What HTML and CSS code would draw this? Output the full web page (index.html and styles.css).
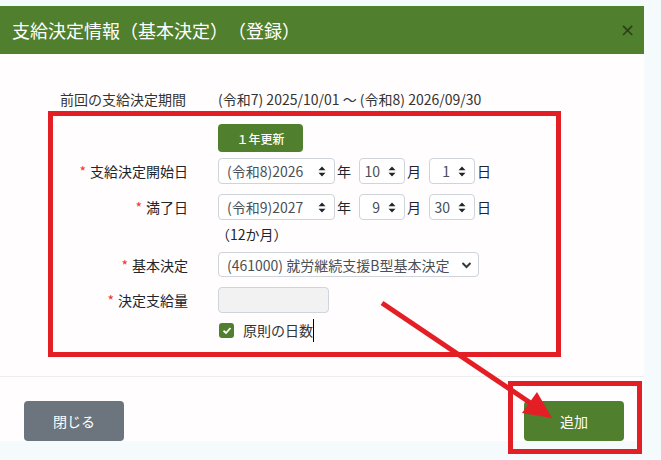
FILE: index.html
```html
<!DOCTYPE html>
<html lang="ja">
<head>
  <meta charset="UTF-8" />
  <title>支給決定情報（基本決定）（登録）</title>
  <link rel="stylesheet" href="styles.css">
</head>
<body>

  <div class="modal">
    <div class="modal-header">
      <h2 class="modal-title">支給決定情報（基本決定）（登録）</h2>
      <span class="close">×</span>
    </div>

    <div class="modal-body">
      <div class="prev-row">
        <span class="prev-label">前回の支給決定期間</span>
        <span>(令和7) 2025/10/01 ～ (令和8) 2026/09/30</span>
      </div>

      <div class="form-row row-btn">
        <span></span>
        <div><button class="btn btn-green btn-small">１年更新</button></div>
      </div>

      <div class="form-row row-start">
        <label><span class="req">*</span>支給決定開始日</label>
        <div class="date">
          <div class="select sel-year"><span>(令和8)2026</span><svg width="8" height="11" viewBox="0 0 8 11"><path d="M4 0.5 L7.5 4.2 H0.5 Z M4 10.5 L7.5 6.8 H0.5 Z" fill="#212529"/></svg></div>
          <span class="unit">年</span>
          <div class="select sel-num"><span>10</span><svg width="8" height="11" viewBox="0 0 8 11"><path d="M4 0.5 L7.5 4.2 H0.5 Z M4 10.5 L7.5 6.8 H0.5 Z" fill="#212529"/></svg></div>
          <span class="unit">月</span>
          <div class="select sel-num"><span>1</span><svg width="8" height="11" viewBox="0 0 8 11"><path d="M4 0.5 L7.5 4.2 H0.5 Z M4 10.5 L7.5 6.8 H0.5 Z" fill="#212529"/></svg></div>
          <span class="unit">日</span>
        </div>
      </div>

      <div class="form-row row-end">
        <label><span class="req">*</span>満了日</label>
        <div class="date">
          <div class="select sel-year"><span>(令和9)2027</span><svg width="8" height="11" viewBox="0 0 8 11"><path d="M4 0.5 L7.5 4.2 H0.5 Z M4 10.5 L7.5 6.8 H0.5 Z" fill="#212529"/></svg></div>
          <span class="unit">年</span>
          <div class="select sel-num"><span>9</span><svg width="8" height="11" viewBox="0 0 8 11"><path d="M4 0.5 L7.5 4.2 H0.5 Z M4 10.5 L7.5 6.8 H0.5 Z" fill="#212529"/></svg></div>
          <span class="unit">月</span>
          <div class="select sel-num"><span>30</span><svg width="8" height="11" viewBox="0 0 8 11"><path d="M4 0.5 L7.5 4.2 H0.5 Z M4 10.5 L7.5 6.8 H0.5 Z" fill="#212529"/></svg></div>
          <span class="unit">日</span>
        </div>
      </div>

      <div class="form-row row-months">
        <span></span>
        <span class="months">（12か月）</span>
      </div>

      <div class="form-row row-kind">
        <label><span class="req">*</span>基本決定</label>
        <div class="select sel-wide"><span>(461000) 就労継続支援B型基本決定</span><svg width="11" height="8" viewBox="0 0 11 8"><path d="M1.5 2 L5.5 6 L9.5 2" fill="none" stroke="#343a40" stroke-width="2"/></svg></div>
      </div>

      <div class="form-row row-amount">
        <label><span class="req">*</span>決定支給量</label>
        <div class="input-disabled"></div>
      </div>

      <div class="form-row row-check">
        <span></span>
        <div class="check">
          <span class="checkbox"><svg width="10" height="9" viewBox="0 0 10 9"><path d="M1.5 4.8 L4 7 L8.5 2" fill="none" stroke="#fff" stroke-width="1.8"/></svg></span>
          <span>原則の日数</span><span class="caret"></span>
        </div>
      </div>
    </div>

    <div class="modal-footer">
      <button class="btn btn-gray">閉じる</button>
      <button class="btn btn-green">追加</button>
    </div>
  </div>

  <!-- annotation marks over the screenshot -->
  <svg class="marks" width="661" height="460" viewBox="0 0 661 460">
    <rect x="50.5" y="113.5" width="508" height="241" fill="none" stroke="#e31e24" stroke-width="5"/>
    <rect x="510.5" y="383.5" width="129" height="68" fill="none" stroke="#e31e24" stroke-width="5"/>
    <line x1="382" y1="303" x2="532" y2="404" stroke="#e31e24" stroke-width="5"/>
    <polygon points="522,413 537,392 552,418" fill="#e31e24"/>
  </svg>

</body>
</html>
```

FILE: styles.css
```css
:root {
  --green: #507f2e;
  --gray: #6c757d;
  --text: #212529;
  --muted: #495057;
  --border: #ced4da;
  --font-main: "Noto Sans CJK JP", "Noto Sans", sans-serif;
}

body {
  margin: 0;
  background: #f5fbfd;
  font-family: var(--font-main);
  font-size: 14px;
  color: var(--text);
  position: relative;
  height: 460px;
  overflow: hidden;
  text-spacing-trim: space-all;
}

.modal {
  width: 644px;
  margin-top: 6px;
  background: #fffdfd;
}

.modal-header {
  height: 48px;
  background: var(--green);
  display: flex;
  align-items: center;
  justify-content: space-between;
  padding: 0 9px 0 12px;
}

.modal-title {
  margin: 0;
  font-size: 18px;
  font-weight: normal;
  color: #fff;
  line-height: 24px;
}

.close {
  font-family: "DejaVu Sans", sans-serif;
  font-size: 18px;
  color: #000;
  opacity: 0.5;
  line-height: 20px;
}

.modal-body {
  padding: 35px 0 0 0;
  height: 287px;
  border-bottom: 1px solid #eceeef;
}

.prev-row {
  display: flex;
  padding-left: 60px;
  line-height: 20px;
  color: #333;
}

.prev-label {
  width: 158px;
}

.form-row {
  display: grid;
  grid-template-columns: 188px 1fr;
  column-gap: 30px;
  align-items: center;
}

.form-row label {
  text-align: right;
  line-height: 20px;
}

.req {
  color: #e8343a;
  margin-right: 4px;
}

.row-btn { margin-top: 15px; }
.row-start { margin-top: 6px; }
.row-end { margin-top: 10px; }
.row-months { margin-top: 4px; line-height: 20px; }
.row-kind { margin-top: 8px; }
.row-amount { margin-top: 10px; }
.row-check { margin-top: 5px; }

.date {
  display: flex;
  align-items: center;
}

.select {
  height: 26px;
  box-sizing: border-box;
  border: 1px solid var(--border);
  border-radius: 4px;
  background: #fff;
  color: var(--muted);
  display: flex;
  align-items: center;
  justify-content: space-between;
  padding: 0 8px 0 8px;
}

.sel-year { width: 117px; }

.sel-num {
  width: 46px;
  padding-left: 4px;
}

.sel-num span {
  flex: 1;
  text-align: right;
  margin-right: 8px;
}

.sel-wide {
  width: 261px;
  height: 25px;
  padding-right: 6px;
}

.unit {
  margin: 0 8px 0 2px;
}

.months {
  margin-left: -2px;
}

.input-disabled {
  width: 111px;
  height: 26px;
  box-sizing: border-box;
  border: 1px solid var(--border);
  border-radius: 4px;
  background: #f2f2f2;
}

.check {
  display: flex;
  align-items: center;
  line-height: 24px;
  color: #333;
}

.checkbox {
  width: 15px;
  height: 15px;
  border-radius: 3px;
  background: var(--green);
  display: flex;
  align-items: center;
  justify-content: center;
  margin: 0 9px 0 1px;
}

.caret {
  width: 1px;
  height: 23px;
  background: #000;
}

.modal-footer {
  display: flex;
  justify-content: space-between;
  padding: 24px 20px 0 24px;
}

.btn {
  width: 100px;
  height: 40px;
  border: none;
  border-radius: 4px;
  color: #fff;
  font-family: var(--font-main);
  font-size: 14px;
}

.btn-green { background: var(--green); }
.btn-gray { background: var(--gray); }

.btn-small {
  width: 85px;
  height: 28px;
  font-size: 12px;
  font-weight: 500;
}

.marks {
  position: absolute;
  top: 0;
  left: 0;
  pointer-events: none;
}
```
